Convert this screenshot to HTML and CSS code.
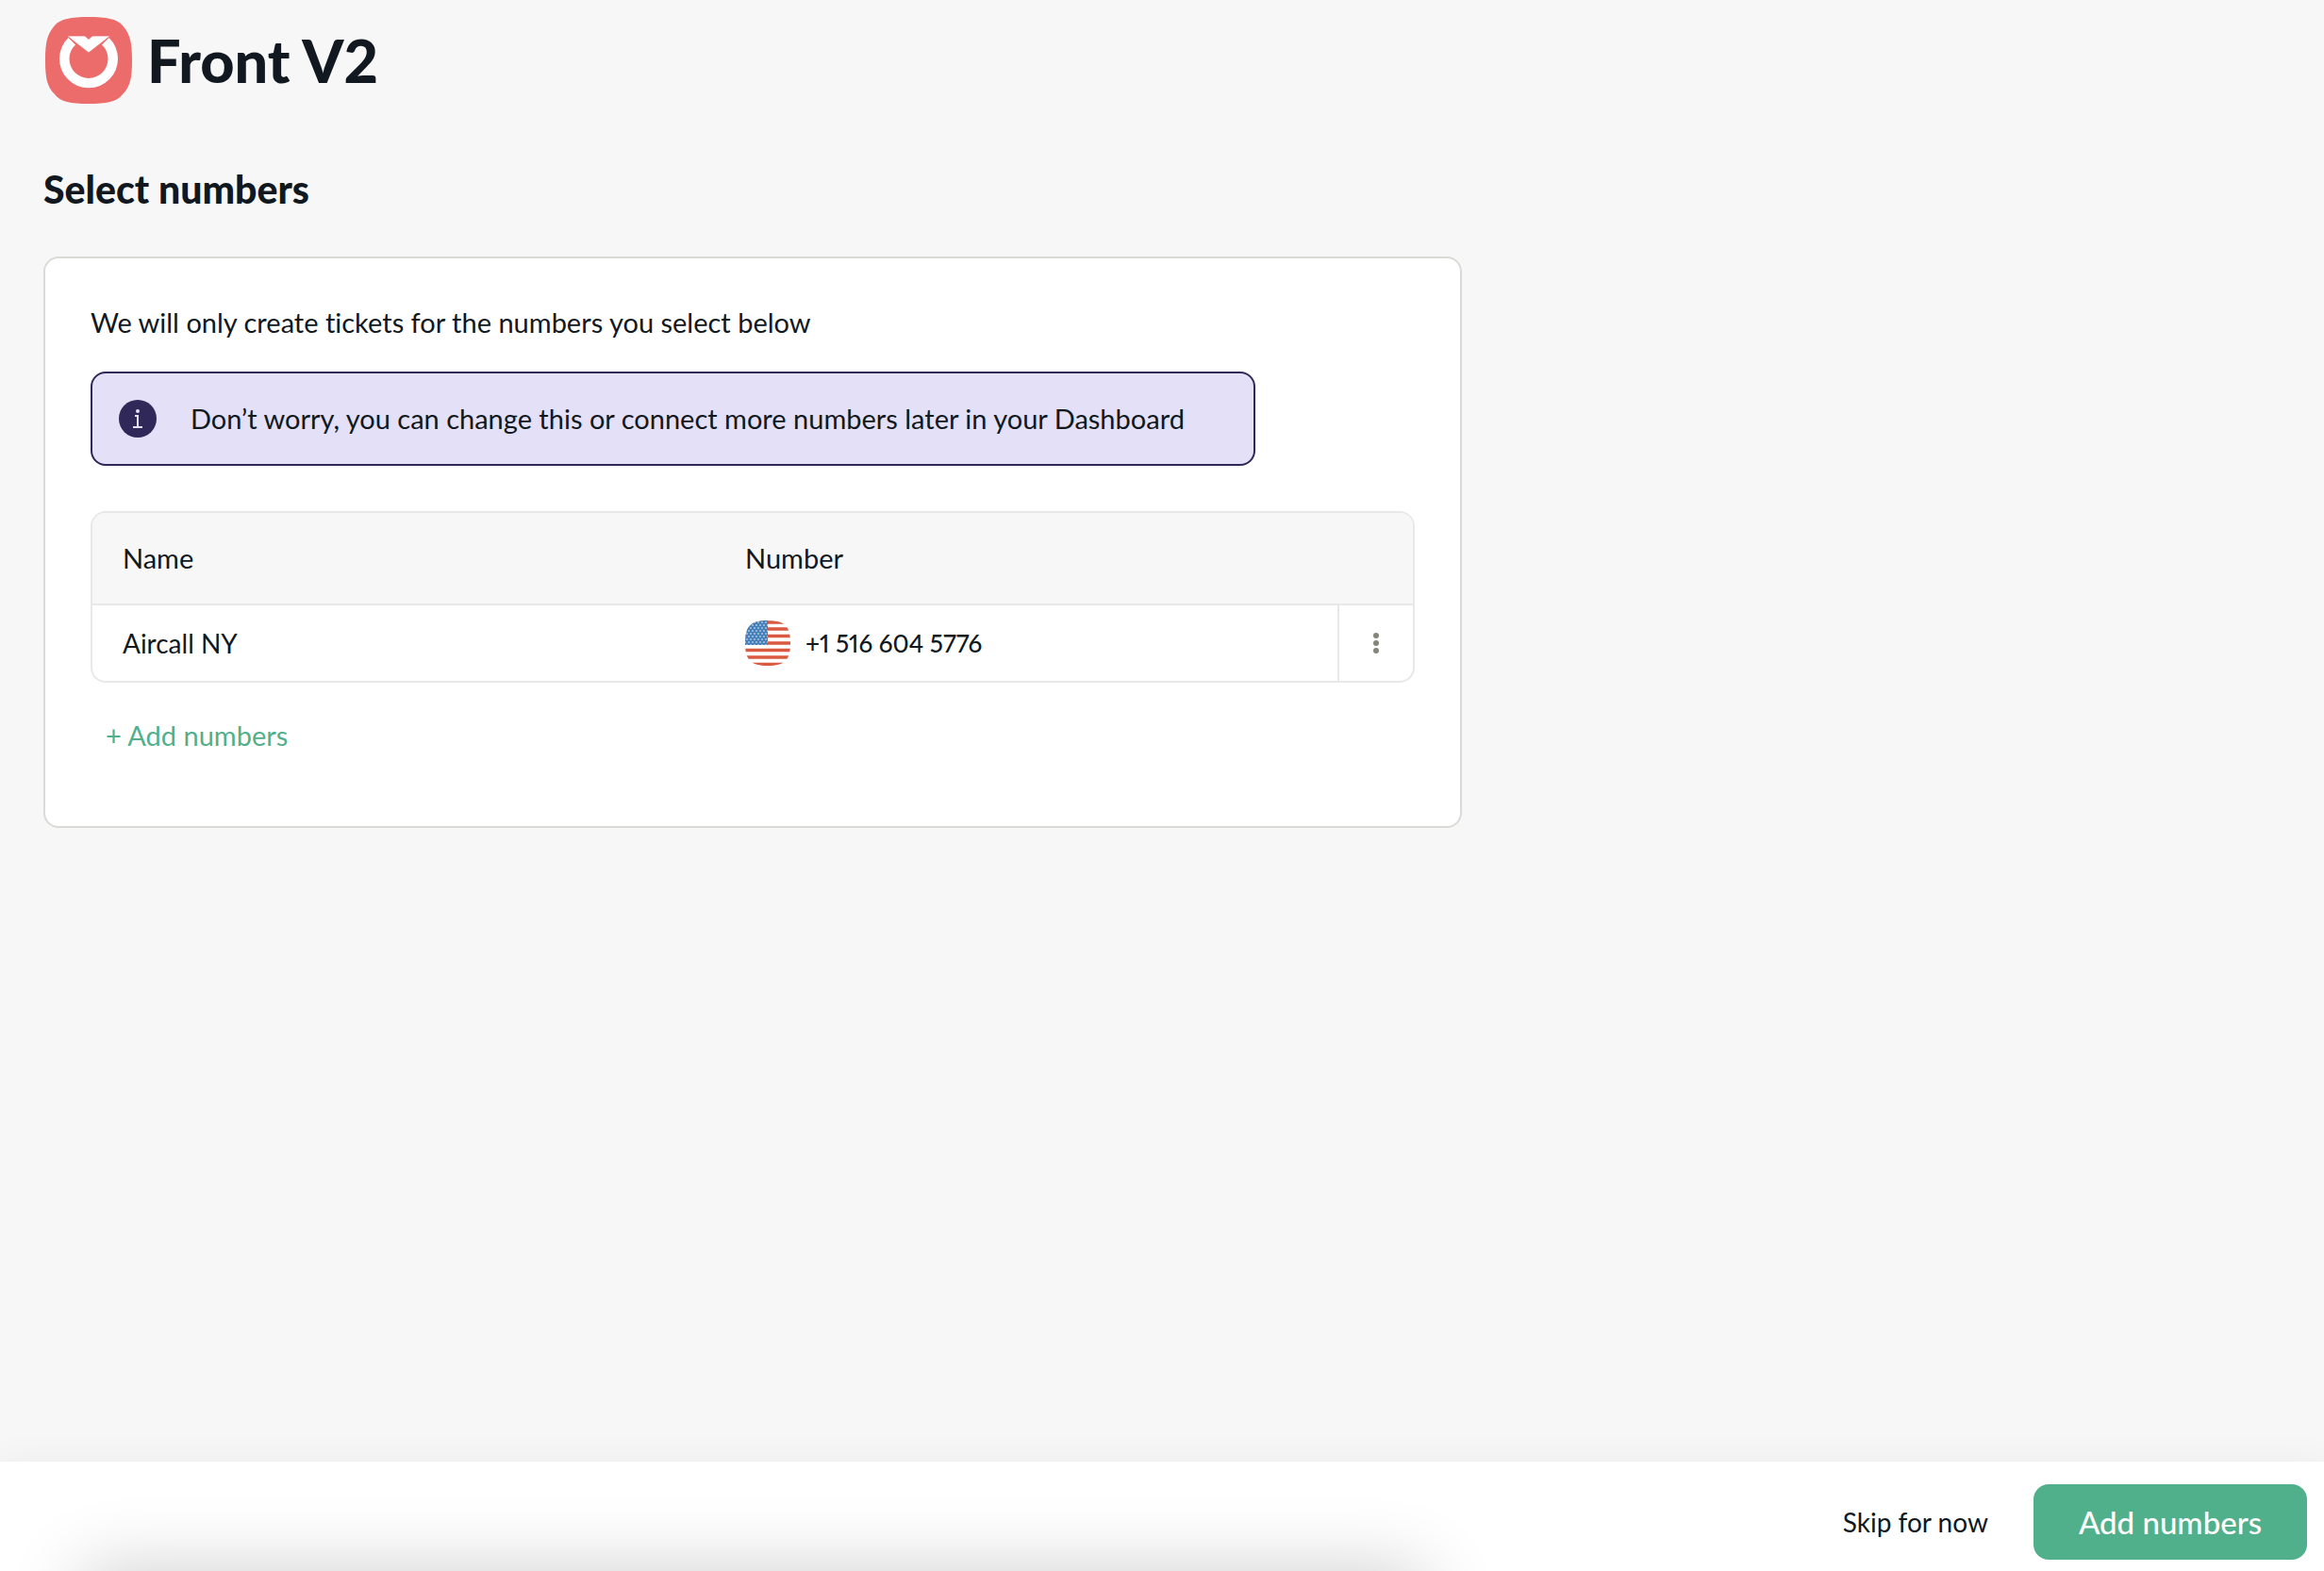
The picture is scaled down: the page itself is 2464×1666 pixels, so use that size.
FILE: index.html
```html
<!DOCTYPE html>
<html lang="en">
<head>
    <meta charset="UTF-8">
    <meta name="viewport" content="width=device-width, initial-scale=1.0">
    <title>Front V2 - Select numbers</title>
    <link rel="stylesheet" href="styles.css">
</head>
<body>
    <main class="page">
        <header class="page-header">
            <svg class="logo" viewBox="0 0 92 92" aria-hidden="true">
                <path fill="#ec6b6b" d="M46 0C65 0 76 2 82 9C90 18 92 27 92 46C92 65 90 74 82 82C76 90 65 92 46 92C27 92 16 90 10 82C2 74 0 65 0 46C0 27 2 18 10 9C16 2 27 0 46 0Z"/>
                <path fill="#fff" d="M24.500 22L32 29.500A20.500 20.500 0 1 0 60 29.500L67.500 22A31 31 0 1 1 24.500 22Z"/>
                <path fill="#fff" stroke="#ec6b6b" stroke-width="0.800" d="M23 20H42L46 23.500L50 20H69L46 38Z"/>
            </svg>
            <h1>Front V2</h1>
        </header>

        <h2>Select numbers</h2>

        <section class="card">
            <p class="intro">We will only create tickets for the numbers you select below</p>

            <div class="banner">
                <svg class="info-icon" viewBox="0 0 40 40" aria-hidden="true">
                    <circle cx="20" cy="20" r="20" fill="#2f2858"/>
                    <circle cx="20" cy="12" r="2" fill="#e3e0f7"/>
                    <path d="M17 17H20V29M15 29H25" fill="none" stroke="#e3e0f7" stroke-width="2"/>
                </svg>
                <span>Don’t worry, you can change this or connect more numbers later in your Dashboard</span>
            </div>

            <div class="table-box">
                <table class="numbers">
                    <thead>
                        <tr>
                            <th>Name</th>
                            <th>Number</th>
                            <th class="col-menu"></th>
                        </tr>
                    </thead>
                    <tbody>
                        <tr>
                            <td>Aircall NY</td>
                            <td>
                                <div class="phone">
                                    <svg class="flag" viewBox="0 0 48 48" role="img" aria-label="United States">
                                        <defs>
                                            <clipPath id="flagShape">
                                                <path d="M24 0C42 0 48 6 48 24C48 42 42 48 24 48C6 48 0 42 0 24C0 6 6 0 24 0Z"/>
                                            </clipPath>
                                            <pattern id="stars" width="4" height="6" patternUnits="userSpaceOnUse">
                                                <path d="M1 2H3M-1 5H1M3 5H5" stroke="#dfe9f3" stroke-width="1"/>
                                            </pattern>
                                        </defs>
                                        <g clip-path="url(#flagShape)">
                                            <rect width="48" height="48" fill="#fff"/>
                                            <path d="M0 2H48M0 9H48M0 16.500H48M0 24H48M0 31.500H48M0 39H48M0 46.500H48" stroke="#da5a41" stroke-width="3.700"/>
                                            <rect width="24" height="26" fill="#447fba"/>
                                            <rect width="24" height="26" fill="url(#stars)"/>
                                        </g>
                                    </svg>
                                    <span>+1 516 604 5776</span>
                                </div>
                            </td>
                            <td class="menu-cell">
                                <button type="button" class="menu-btn" aria-label="More options">
                                    <svg viewBox="0 0 6 22" aria-hidden="true">
                                        <circle cx="3" cy="3" r="3"/>
                                        <circle cx="3" cy="11" r="3"/>
                                        <circle cx="3" cy="19" r="3"/>
                                    </svg>
                                </button>
                            </td>
                        </tr>
                    </tbody>
                </table>
            </div>

            <button type="button" class="add-link">+ Add numbers</button>
        </section>
    </main>

    <footer class="footer">
        <button type="button" class="skip-btn">Skip for now</button>
        <button type="button" class="primary-btn">Add numbers</button>
    </footer>
</body>
</html>
```

FILE: styles.css
```css
* {
    box-sizing: border-box;
}
body {
    display: flex;
    flex-direction: column;
    min-height: 100vh;
    margin: 0;
    overflow-x: hidden;
    background-color: #f7f7f7;
    color: #111820;
    font-family: Lato, sans-serif;
    font-size: 29px;
    line-height: 40px;
    font-variant-ligatures: none;
}
button {
    padding: 0;
    border: none;
    background: none;
    color: inherit;
    font: inherit;
    font-variant-ligatures: none;
    cursor: pointer;
}
.page {
    flex: 1;
    padding: 18px 46px;
}
.page-header {
    display: flex;
    align-items: center;
    gap: 16px;
}
.logo {
    width: 92px;
    height: 92px;
    margin-left: 2px;
}
h1 {
    margin: 0;
    font-size: 63px;
    line-height: 90px;
    font-weight: 900;
}
h2 {
    margin: 64px 0 0;
    font-size: 41px;
    line-height: 54px;
    font-weight: 900;
}
.card {
    max-width: 1504px;
    margin-top: 44px;
    padding: 48px;
    border: 2px solid #dadad6;
    border-radius: 16px;
    background-color: #fff;
}
.intro {
    margin: 0 0 32px;
}
.banner {
    display: flex;
    align-items: center;
    gap: 36px;
    max-width: 1235px;
    min-height: 100px;
    padding: 8px 28px;
    border: 2px solid #2f2858;
    border-radius: 16px;
    background-color: #e3e0f7;
}
.info-icon {
    flex: none;
    width: 40px;
    height: 40px;
}
.table-box {
    margin-top: 48px;
    overflow: hidden;
    border: 2px solid #e8e8e8;
    border-radius: 16px;
}
.numbers {
    width: 100%;
    border-collapse: separate;
    border-spacing: 0;
    table-layout: fixed;
}
.numbers th,
.numbers td {
    padding: 0 32px;
    text-align: left;
    font-weight: 400;
}
.numbers th {
    height: 98px;
    border-bottom: 2px solid #e8e8e8;
    background-color: #f7f7f7;
}
.numbers td {
    height: 80px;
}
.numbers td:first-child {
    font-size: 28px;
}
.numbers .col-menu {
    width: 80px;
}
.phone {
    display: flex;
    align-items: center;
    gap: 16px;
    font-size: 26px;
    font-weight: 500;
    font-variant-numeric: proportional-nums;
}
.flag {
    width: 48px;
    height: 48px;
}
.numbers .menu-cell {
    padding: 0;
    border-left: 2px solid #e8e8e8;
}
.menu-btn {
    display: flex;
    align-items: center;
    justify-content: center;
    width: 100%;
    height: 80px;
}
.menu-btn svg {
    width: 6px;
    height: 22px;
    fill: #85857b;
}
.add-link {
    display: block;
    margin: 36px 0 28px;
    padding: 0 16px;
    color: #51b08c;
}
.footer {
    position: relative;
    display: flex;
    align-items: center;
    justify-content: flex-end;
    gap: 48px;
    overflow: hidden;
    padding: 24px 18px 12px;
    background-color: #fff;
    box-shadow: 0 0 40px rgba(0, 0, 0, 0.05);
}
/* soft shadow rising from under the bottom edge */
.footer::after {
    content: "";
    position: absolute;
    top: 100%;
    left: 86px;
    width: 1424px;
    height: 80px;
    box-shadow: 0 0 80px rgba(0, 0, 0, 0.2);
}
.skip-btn {
    font-size: 28px;
}
.primary-btn {
    height: 80px;
    padding: 0 48px;
    border-radius: 16px;
    background-color: #51b08c;
    color: #fff;
    font-size: 33px;
    font-weight: 500;
}
```
